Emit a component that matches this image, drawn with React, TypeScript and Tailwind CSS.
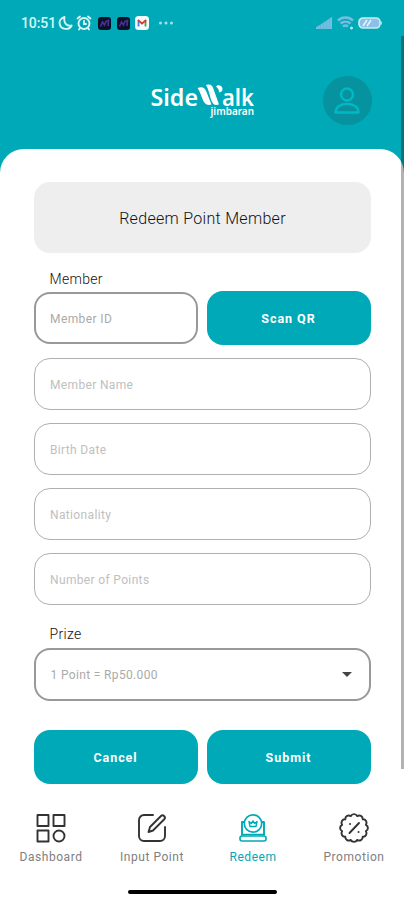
import { ReactNode } from "react";

const fields = ["Member Name", "Birth Date", "Nationality", "Number of Points"];

// scalloped outline of the promotion badge: 12 small arcs on a circle
const badgePoints = Array.from({ length: 12 }, (_, i) => {
  const a = ((i * 30 + 15) * Math.PI) / 180;
  return `${(16 + 12.3 * Math.cos(a)).toFixed(2)} ${(16 + 12.3 * Math.sin(a)).toFixed(2)}`;
});
const badgePath = `M${badgePoints[11]}` + badgePoints.map((p) => `A3.5 3.5 0 0 1 ${p}`).join("") + "z";

function StatusBar() {
  return (
    <div className="flex h-[46px] items-center justify-between pl-[21px] pr-[22px]">
      <div className="flex items-center text-[#d8f6f6]">
        <span className="w-[35px] whitespace-nowrap text-[14px] font-medium tracking-[-0.100px]">10:51</span>
        <svg className="ml-[2px]" width="16" height="16" viewBox="0 0 16 16" fill="none" stroke="currentColor" strokeWidth="1.9">
          <path d="M6.500 2C3 3 1 6 1.700 9c1.300 6 9.500 6.500 12 1.500-4 1-8.500-1.500-7.200-8.500z" strokeLinejoin="round" />
        </svg>
        <svg className="ml-[2px]" width="16" height="16" viewBox="0 0 16 16" fill="none" stroke="currentColor" strokeWidth="1.9" strokeLinecap="round">
          <circle cx="8" cy="8.500" r="5.500" />
          <path d="M1.500 3.500 4 1.500M14.500 3.500 12 1.500M8 6v3h2M4 13l-1 1.500M12 13l1 1.500" />
        </svg>
        <AppBadge className="ml-[6px]" />
        <AppBadge className="ml-[6px]" />
        <svg className="ml-[5px]" width="14" height="14" viewBox="0 0 14 14">
          <rect width="14" height="14" rx="3.500" fill="#f5fbfb" />
          <path d="M3.500 10.500V4.500" stroke="#4285f4" strokeWidth="1.800" />
          <path d="M10.500 10.500V4.500" stroke="#34a853" strokeWidth="1.800" />
          <path d="M2.800 4 7 7.500 11.200 4" stroke="#d93a30" strokeWidth="1.800" fill="none" />
        </svg>
        <svg className="ml-[9px]" width="16" height="4" viewBox="0 0 16 4" fill="#a2e2e8">
          <circle cx="2.500" cy="2" r="1.500" />
          <circle cx="8" cy="2" r="1.500" />
          <circle cx="13.500" cy="2" r="1.500" />
        </svg>
      </div>
      <div className="flex items-center">
        <svg width="16" height="12" viewBox="0 0 16 12" fill="#74bfe0">
          <path d="M0 12V10L16 0V12z" opacity=".6" />
          <path d="M0 12V10.500L4 8.500V12zM4.500 12V8L7 6.500V12zM7.500 12V6L10 4.500V12zM10.500 12V4L13 2V12zM13.500 12V1.500L16 0V12z" />
        </svg>
        <svg className="ml-[5px]" width="17" height="14" viewBox="0 0 17 14" fill="none" stroke="#74bfe0" strokeWidth="2.500">
          <path d="M1 4.500C5 .5 12 .5 16 4.500M3.500 7.500c3-2.500 7-2.500 10 0M6 10.500c2-1.500 3-1.500 5 0" />
          <circle cx="14.500" cy="12" r="1" fill="#c5eef2" stroke="#c5eef2" strokeWidth="1" />
        </svg>
        <svg className="ml-[4px]" width="24" height="12" viewBox="0 0 24 12">
          <rect x="1" y="1" width="21" height="10" rx="4" fill="#8fbfe8" stroke="#c0f0ee" strokeWidth="1.700" />
          <path d="m5 9 4-6M9 9l4-6" stroke="#d9f6fa" strokeWidth="1.600" />
          <path d="M23.300 4.500v3" stroke="#c0f0ee" />
        </svg>
      </div>
    </div>
  );
}

function AppBadge({ className }: { className: string }) {
  return (
    <svg className={className} width="13" height="13" viewBox="0 0 13 13">
      <rect width="13" height="13" rx="3" fill="#071225" />
      <path d="M2.500 9.500 4.500 5l2 3L8 4.500l2.500-1-.5 5.500" fill="none" stroke="#4b2a9c" strokeWidth="1.700" />
    </svg>
  );
}

function Logo() {
  return (
    <svg className="overflow-visible" width="106" height="38" viewBox="0 0 106 38" fill="#fff">
      <g fontFamily="'Noto Sans', sans-serif" fontWeight="600">
        <text x="0.500" y="23.500" fontSize="24" textLength="47.500" lengthAdjust="spacingAndGlyphs">Side</text>
        <text x="72" y="23.500" fontSize="24" textLength="32" lengthAdjust="spacingAndGlyphs">alk</text>
        <text x="60.500" y="33" fontSize="10" textLength="43.500" lengthAdjust="spacingAndGlyphs">jimbaran</text>
      </g>
      <path d="M47.500 6c5-2 7.500 0 9 4l5 12.500c-5 1.500-7-1-9-5.500-1.800-4-2.500-8-5-11z" />
      <path d="M56 3c4.500-1.500 6.500.5 7.500 4l5.500 15.500c-4.500 1.500-6.500-.5-8-5-1.500-5-2.500-10.500-5-14.500z" />
      <path d="M66 4.500c2-2.500 6.500-1 6.500 2.500 0 2.500-1.500 3-3.500 3.500 0-3-1-4.500-3-6z" />
    </svg>
  );
}

function Button({ children }: { children: ReactNode }) {
  return (
    <button className="h-[54px] rounded-[16px] bg-[#00a9b7] pt-[2px] text-[12.5px] font-bold tracking-[0.950px] text-white">
      {children}
    </button>
  );
}

function NavItem({ label, active, children }: { label: string; active?: boolean; children: ReactNode }) {
  return (
    <div className={`flex w-[101px] flex-col items-center ${active ? "text-[#00a9b7]" : "text-[#333]"}`}>
      <svg width="32" height="32" viewBox="0 0 32 32" fill="none" stroke="currentColor" strokeWidth="1.900" strokeLinecap="round" strokeLinejoin="round">
        {children}
      </svg>
      <span className={`mt-[4px] whitespace-nowrap pl-[1px] text-[12px] leading-[18px] tracking-[0.550px] ${active ? "" : "text-[#808080]"}`}>{label}</span>
    </div>
  );
}

export default function App() {
  return (
    <div className="relative h-[900px] w-[404px] overflow-hidden bg-[#00a9b7] font-[Roboto,sans-serif]">
      <StatusBar />
      <header className="flex h-[103px] items-start pl-[150px] pt-[30px]">
        <div className="mt-[6px]">
          <Logo />
        </div>
        <div className="ml-[67px] flex h-[49px] w-[49px] items-center justify-center rounded-full bg-[#07929f]">
          <svg className="-ml-[2px]" width="26" height="28" viewBox="0 0 26 28" fill="none" stroke="#00b9c6" strokeWidth="2.400" strokeLinejoin="round">
            <circle cx="13" cy="7.500" r="6" />
            <path d="M1.500 25.500c0-11.500 23-11.500 23 0z" />
          </svg>
        </div>
      </header>

      <main className="h-[751px] rounded-t-[24px] bg-white px-[33.500px] pt-[33px]">
        <h1 className="flex h-[71px] items-center justify-center rounded-[16px] bg-[#eee] pl-[1px] pt-[3px] text-[16px] font-light tracking-[0.300px] text-[#111]">
          Redeem Point Member
        </h1>

        <div className="mt-[16px] pl-[16px] text-[14px] font-light leading-[20px] tracking-[0.300px] text-[#111]">Member</div>
        <div className="mt-[2px] grid grid-cols-2 items-center gap-[9px]">
          <div className="flex h-[52px] items-center rounded-[16px] border-2 border-[#999] pl-[14.500px] pt-[2px] text-[12px] tracking-[0.400px] text-[#aaa]">
            Member ID
          </div>
          <Button>Scan QR</Button>
        </div>

        <div className="mt-[13px] flex flex-col gap-[13px]">
          {fields.map((f) => (
            <div key={f} className="flex h-[52px] items-center rounded-[16px] border border-[#b0b0b0] pl-[15.500px] pt-[2px] text-[12px] tracking-[0.350px] text-[#c0c0c0]">
              {f}
            </div>
          ))}
        </div>

        <div className="mt-[19px] pl-[16px] text-[14px] font-light leading-[20px] tracking-[0.300px] text-[#111]">Prize</div>
        <div className="mt-[4px] flex h-[53px] items-center justify-between rounded-[16px] border-2 border-[#999] pl-[15px] pr-[17px] text-[12px] tracking-[0.350px] text-[#aaa]">
          <span className="pt-[1px]">1 Point = Rp50.000</span>
          <svg width="10" height="5" viewBox="0 0 10 5" fill="#444">
            <path d="M0 0h10L5 5z" />
          </svg>
        </div>

        <div className="mt-[29px] grid grid-cols-2 gap-[9px]">
          <Button>Cancel</Button>
          <Button>Submit</Button>
        </div>

        <nav className="-mx-[33.500px] mt-[28px] flex">
          <NavItem label="Dashboard">
            <path d="M2.500 3h11v11h-11zM18.500 3h11v11h-11zM2.500 18.500h11v11h-11z" />
            <circle cx="24" cy="24" r="5.500" />
          </NavItem>
          <NavItem label="Input Point">
            <path d="M17 3H8a5 5 0 0 0-5 5v16a5 5 0 0 0 5 5h16a5 5 0 0 0 5-5v-9" />
            <path d="M14 15 25 4c2-2 5 1 3.500 3L17 18.500l-4.500 1.500z" />
          </NavItem>
          <NavItem label="Redeem" active>
            <circle cx="16" cy="11.500" r="8.700" strokeWidth="1.700" />
            <path d="M7 10H5v13M25 10h2v13" />
            <rect x="3" y="24" width="26" height="5" rx="2" strokeWidth="1.600" />
            <path d="M6 22.500h20" strokeWidth="1.400" />
            <path d="m12 9.500 1 5h6l1-5-2.300 2L16 9l-1.700 2.500z" strokeWidth="1.400" />
          </NavItem>
          <NavItem label="Promotion">
            <path d={badgePath} />
            <path d="m11.500 21 9.500-10M12 12h.1M20.500 20h.1" />
          </NavItem>
        </nav>
      </main>

      <div className="absolute bottom-[6px] left-[128px] h-[4px] w-[149px] rounded-full bg-black" />
      <div className="absolute right-0 top-[36px] h-[733px] w-[3px] bg-black/30" />
    </div>
  );
}
